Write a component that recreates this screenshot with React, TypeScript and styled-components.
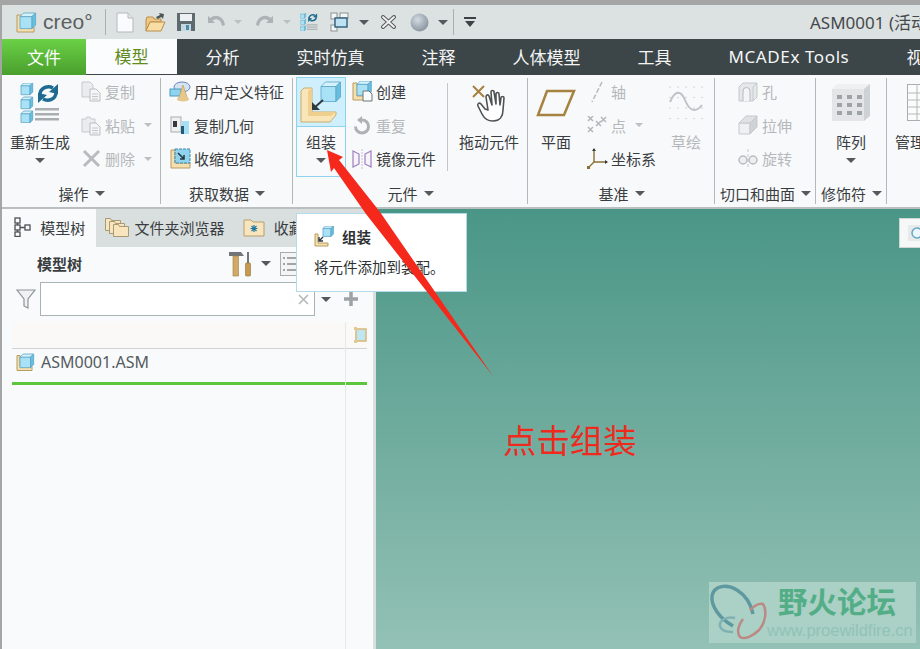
import React from 'react';
import styled, { createGlobalStyle } from 'styled-components';

const FONT = '"Noto Sans CJK SC", "Noto Sans", sans-serif';

const GlobalStyle = createGlobalStyle`
  html, body {
    margin: 0;
    padding: 0;
    background: #a5a5a5;
    overflow: hidden;
  }
  * {
    box-sizing: border-box;
  }
`;

// ------
// Layout
// ------

const Page = styled.div`
  position: relative;
  width: 920px;
  height: 649px;
  overflow: hidden;
  padding: 5px 0 0 2px;
  display: flex;
  flex-direction: column;
  background: #a5a5a5;
  font-family: ${FONT};
  font-size: 15px;
  color: #3a3d3f;
`;

const TitleBar = styled.div`
  flex: 0 0 34px;
  display: flex;
  align-items: center;
  background: #dce1e1;
`;

const Brand = styled.div`
  flex: 0 0 104px;
  height: 26px;
  display: flex;
  align-items: center;
  gap: 6px;
  padding-left: 14px;
  border-right: 1px solid #a9afaf;
`;

const BrandName = styled.span`
  font-family: 'Liberation Sans', sans-serif;
  font-size: 21px;
  letter-spacing: 0.1px;
  color: #5a5f61;
`;

const QuickBar = styled.div`
  flex: 0 0 704px;
  display: flex;
  align-items: center;
  padding-left: 10px;
`;

const QuickSlot = styled.span<{ $left?: number }>`
  flex: none;
  display: flex;
  align-items: center;
  justify-content: center;
  margin-left: ${p => p.$left ?? 0}px;
`;

const QuickDivider = styled.span`
  width: 1px;
  height: 26px;
  margin-left: 5px;
  background: #a9afaf;
`;

const WindowTitle = styled.div`
  flex: none;
  margin-top: -2px;
  white-space: nowrap;
  font-family: 'Noto Sans', 'Noto Sans CJK SC', sans-serif;
  font-size: 17px;
  color: #45494b;
`;

const TabBar = styled.div`
  flex: 0 0 36px;
  display: flex;
  background: #3c4547;
  color: #f4f6f6;
  font-size: 17px;
  white-space: nowrap;
`;

const FileTab = styled.div`
  flex: 0 0 84px;
  display: flex;
  align-items: center;
  justify-content: center;
  padding-bottom: 2px;
  color: #fff;
  background: linear-gradient(180deg, #6ad146 0%, #4a9f2d 100%);
`;

const ActiveTab = styled.div`
  flex: 0 0 91px;
  display: flex;
  align-items: center;
  justify-content: center;
  padding-bottom: 2px;
  color: #5f8c1c;
  background: #fbfcfd;
  margin-bottom: 1px;
`;

const Tab = styled.div<{ $latin?: boolean }>`
  flex: none;
  display: flex;
  align-items: center;
  padding: 0 28.5px 2px;
  font-family: 'Noto Sans', 'Noto Sans CJK SC', sans-serif;
  letter-spacing: ${p => (p.$latin ? '0.6px' : '0')};
`;

const Ribbon = styled.div`
  flex: 0 0 134px;
  display: flex;
  background: #f8f9fb;
  border-bottom: 2px solid #b9bebf;
  white-space: nowrap;
`;

const Group = styled.section<{ $width: number }>`
  flex: 0 0 ${p => p.$width}px;
  min-width: 0;
  height: 132px;
  display: flex;
  flex-direction: column;
  position: relative;
  &::after {
    content: '';
    position: absolute;
    top: 3px;
    bottom: 3px;
    right: 0;
    width: 1px;
    background: #b4b8ba;
  }
`;

const GroupBody = styled.div`
  flex: 0 0 102px;
  display: flex;
`;

const GroupLabel = styled.div`
  flex: 1;
  display: flex;
  align-items: center;
  justify-content: center;
  gap: 6px;
  padding-top: 3px;
`;

const Caret = styled.span<{ $light?: boolean; $small?: boolean }>`
  flex: none;
  display: block;
  width: 0;
  height: 0;
  border-left: ${p => (p.$small ? 4 : 5)}px solid transparent;
  border-right: ${p => (p.$small ? 4 : 5)}px solid transparent;
  border-top: ${p => (p.$small ? 4 : 5)}px solid ${p => (p.$light ? '#bcc0c2' : '#55595b')};
`;

const BigButton = styled.div<{ $width: number; $disabled?: boolean }>`
  flex: 0 0 ${p => p.$width}px;
  display: flex;
  flex-direction: column;
  align-items: center;
  color: ${p => (p.$disabled ? '#b4b8ba' : 'inherit')};
`;

const BigIcon = styled.div`
  flex: 0 0 55px;
  display: flex;
  align-items: center;
  justify-content: center;
`;

const BigLabel = styled.div`
  height: 22px;
  margin-top: 1px;
  line-height: 22px;
`;

const BigCaret = styled(Caret)`
  margin-top: 5px;
`;

const Column = styled.div<{ $width?: number; $left?: number }>`
  flex: 0 0 ${p => (p.$width ? `${p.$width}px` : 'auto')};
  margin-left: ${p => p.$left ?? 0}px;
`;

const Row = styled.div<{ $disabled?: boolean }>`
  height: 33.5px;
  display: flex;
  align-items: center;
  gap: 3px;
  padding-left: 2px;
  color: ${p => (p.$disabled ? '#b4b8ba' : 'inherit')};
`;

const RowIcon = styled.span`
  flex: 0 0 22px;
  display: flex;
  align-items: center;
  justify-content: center;
`;

const RowCaret = styled(Caret)`
  margin-left: 6px;
`;

const AssembleButton = styled.div`
  flex: 0 0 50px;
  height: 100px;
  margin: 2px 3px 0 3px;
  display: flex;
  flex-direction: column;
  align-items: center;
  border: 1px solid #8ed3ee;
`;

const AssembleIcon = styled.div`
  flex: 0 0 49px;
  align-self: stretch;
  display: flex;
  align-items: center;
  justify-content: center;
  background: #cfeffc;
  border-bottom: 1px solid #8ed3ee;
`;

const AssembleLabel = styled.div`
  height: 22px;
  margin-top: 4px;
  line-height: 22px;
`;

const InnerDivider = styled.span`
  flex: none;
  width: 1px;
  height: 88px;
  margin-top: 8px;
  background: #c3c7c9;
`;

const Workspace = styled.div`
  flex: 1;
  display: flex;
  min-height: 0;
`;

const Panel = styled.aside`
  flex: 0 0 371px;
  display: flex;
  flex-direction: column;
  background: #f8fafc;
`;

const PanelTabs = styled.div`
  flex: 0 0 38px;
  display: flex;
  padding-bottom: 2px;
  background: #d9dfdf;
  white-space: nowrap;
  overflow: hidden;
`;

const PanelTab = styled.div<{ $active?: boolean }>`
  flex: none;
  display: flex;
  align-items: center;
  gap: 5px;
  margin-bottom: ${p => (p.$active ? '-2px' : '0')};
  padding: ${p => (p.$active ? '0 11px 2px 12px' : '0 10px 0 9px')};
  background: ${p => (p.$active ? '#f8fafc' : 'transparent')};
`;

const TreeToolbar = styled.div`
  flex: 0 0 35px;
  display: flex;
  align-items: center;
  padding: 0 0 2px 35px;
`;

const TreeTitle = styled.div`
  flex: 0 0 191px;
  font-weight: 700;
`;

const ToolSlot = styled.span<{ $left?: number }>`
  flex: none;
  display: flex;
  align-items: center;
  margin-left: ${p => p.$left ?? 0}px;
`;

const FilterRow = styled.div`
  flex: 0 0 34px;
  display: flex;
  align-items: center;
  padding-left: 14px;
`;

const FilterInput = styled.div`
  flex: 0 0 275px;
  height: 34px;
  margin-left: 4px;
  display: flex;
  align-items: center;
  justify-content: flex-end;
  padding-right: 5px;
  background: #fff;
  border: 1px solid #a6b4b4;
`;

const TreeArea = styled.div`
  flex: 1;
  position: relative;
  margin: 6px 6px 0 10px;
  &::after {
    content: '';
    position: absolute;
    top: 0;
    bottom: 0;
    left: 333px;
    width: 1px;
    background: #e6e9ec;
  }
`;

const TreeHeader = styled.div`
  height: 27px;
  display: flex;
  align-items: center;
  justify-content: flex-end;
  background: #fbf9f8;
  border-bottom: 1px solid #cfd3d3;
  overflow: hidden;
`;

const TreeRow = styled.div`
  height: 33px;
  display: flex;
  align-items: center;
  gap: 6px;
  padding: 0 0 7px 4px;
  font-family: 'Noto Sans', sans-serif;
  font-size: 16px;
  color: #555a5e;
`;

const ActiveLine = styled.div`
  height: 3px;
  background: #5ec63c;
`;

const Splitter = styled.div`
  flex: 0 0 3px;
  background: #d9dfdf;
`;

const Canvas = styled.main`
  flex: 1;
  position: relative;
  background: linear-gradient(180deg, #4a9686 0%, #93c1b5 100%);
`;

const ViewToolbar = styled.div`
  position: absolute;
  top: 9px;
  right: 0;
  width: 21px;
  height: 30px;
  display: flex;
  align-items: center;
  padding-left: 8px;
  background: #f6f8f8;
  border: 1px solid #cfd6d6;
  border-right: 0;
`;

// --------
// Overlays
// --------

const Tooltip = styled.div`
  position: absolute;
  left: 296px;
  top: 213px;
  width: 171px;
  height: 79px;
  padding: 10px 0 0 17px;
  background: #fff;
  border: 1px solid #b2daec;
  font-size: 14.5px;
  color: #2e3133;
`;

const TooltipTitle = styled.div`
  height: 26px;
  display: flex;
  align-items: center;
  gap: 7px;
  padding-bottom: 2px;
  font-weight: 700;
`;

const TooltipText = styled.div`
  margin-top: 6px;
  white-space: nowrap;
`;

const ArrowLayer = styled.svg`
  position: absolute;
  left: 0;
  top: 0;
  pointer-events: none;
`;

const Note = styled.div`
  position: absolute;
  left: 503px;
  top: 415px;
  font-size: 33.4px;
  line-height: 48px;
  color: #ee2a1e;
  white-space: nowrap;
`;

const Watermark = styled.div`
  position: absolute;
  left: 709px;
  top: 582px;
  width: 207px;
  height: 61px;
  display: flex;
  background: #abd0c5;
`;

const WatermarkText = styled.div`
  display: flex;
  flex-direction: column;
  margin-left: -2px;
`;

const WatermarkTitle = styled.div`
  margin-left: 11px;
  font-size: 29.5px;
  line-height: 36px;
  font-weight: 700;
  color: #53ae87;
  white-space: nowrap;
`;

const WatermarkUrl = styled.div`
  margin-top: 1px;
  font-family: 'Liberation Sans', sans-serif;
  font-size: 16.5px;
  line-height: 22px;
  color: #8fc3b6;
  white-space: nowrap;
`;

// -----
// Icons
// -----

function Cube({ x, y, s, faded }: { x: number; y: number; s: number; faded?: boolean }) {
  const d = s * 0.3;
  const fill = faded ? '#e4e7e8' : '#a9e2f7';
  const top = faded ? '#eff1f2' : '#d3f2fc';
  const side = faded ? '#cfd3d5' : '#68bfdf';
  const stroke = faded ? '#c5c9cb' : '#5aa5c4';
  return (
    <g stroke={stroke} strokeWidth="0.8" strokeLinejoin="round">
      <rect x={x} y={y + d} width={s} height={s} fill={fill} />
      <polygon points={`${x},${y + d} ${x + d},${y} ${x + s + d},${y} ${x + s},${y + d}`} fill={top} />
      <polygon points={`${x + s},${y + d} ${x + s + d},${y} ${x + s + d},${y + s} ${x + s},${y + s + d}`} fill={side} />
    </g>
  );
}

function CreoCube() {
  return (
    <svg width="21" height="21" viewBox="0 0 21 21">
      <path d="M1 3h4v12h13v5H1z" fill="#f6dfae" stroke="#b69c62" />
      <Cube x={4} y={1} s={12} />
    </svg>
  );
}

function AsmIcon() {
  return (
    <svg width="19" height="19" viewBox="0 0 19 19">
      <path d="M1 2.5h3v11h12v4H1z" fill="#f6dfae" stroke="#b69c62" />
      <Cube x={4} y={1} s={10.5} />
    </svg>
  );
}

function NewDoc() {
  return (
    <svg width="18" height="21" viewBox="0 0 18 21">
      <path d="M1 1h11l5 5v14H1z" fill="#fafbfc" stroke="#b4b9bc" />
      <path d="M12 1v5h5" fill="#e3e7ea" stroke="#b4b9bc" />
    </svg>
  );
}

function OpenFolder() {
  return (
    <svg width="21" height="21" viewBox="0 0 21 21">
      <path d="M1 8l1-3h6l1 2h7v3H5L1 19z" fill="#f0c885" stroke="#b98f4a" />
      <path d="M1 19l4-9h15l-4 9z" fill="#f8dda4" stroke="#b98f4a" />
      <path d="M11 5l4-2-1-2 5 1-1 5-1.500-2-4 2z" fill="#4e5658" />
    </svg>
  );
}

function SaveDisk() {
  return (
    <svg width="20" height="20" viewBox="0 0 20 20">
      <rect x="1" y="1" width="18" height="18" fill="#5f6a70" />
      <rect x="4" y="2" width="12" height="7" fill="#eef1f3" />
      <rect x="5" y="12" width="10" height="7" fill="#c2d9e4" />
      <rect x="10" y="13" width="3" height="5" fill="#4f8cac" />
    </svg>
  );
}

function Turn({ flip }: { flip?: boolean }) {
  return (
    <svg width="20" height="16" viewBox="0 0 20 16" style={flip ? { transform: 'scaleX(-1)' } : undefined}>
      <path d="M1 2v7h7L5.500 6.500C9 4 14 5 15 12l3-1C17 3 9-1 3.500 4z" fill="#adb3b5" />
    </svg>
  );
}

function Regenerate({ size }: { size: number }) {
  return (
    <svg width={size} height={size} viewBox="0 0 40 40">
      <Cube x={1} y={0} s={9} />
      <Cube x={1} y={14} s={9} />
      <Cube x={1} y={28} s={9} />
      <g fill="none" stroke="#1d6b90" strokeWidth="3.500">
        <path d="M20 11A8.500 7.500 0 0 1 33 5" />
        <path d="M36 10A8.500 7.500 0 0 1 23 16" />
      </g>
      <polygon points="38,1 38,11 29,9" fill="#1d6b90" />
      <polygon points="18,20 18,10 27,12" fill="#1d6b90" />
      <rect x="15" y="25" width="24" height="2.500" fill="#a9aeb0" />
      <rect x="15" y="30" width="24" height="2.500" fill="#a9aeb0" />
      <rect x="15" y="35" width="24" height="2.500" fill="#a9aeb0" />
    </svg>
  );
}

function Windows() {
  return (
    <svg width="19" height="20" viewBox="0 0 19 20">
      <rect x="1" y="1" width="6" height="6" fill="#f4f5f5" stroke="#8c9193" />
      <rect x="10" y="1" width="8" height="5" fill="#f4f5f5" stroke="#8c9193" />
      <rect x="1" y="13" width="6" height="6" fill="#f4f5f5" stroke="#8c9193" />
      <rect x="5" y="6" width="12" height="9" fill="#bfe2f2" stroke="#2b5e7c" strokeWidth="1.400" />
    </svg>
  );
}

function CloseCross() {
  return (
    <svg width="15" height="14" viewBox="0 0 15 14">
      <path d="M2 2l11 10M13 2L2 12" stroke="#5b5f61" strokeWidth="4" strokeLinecap="round" />
      <path d="M2 2l11 10M13 2L2 12" stroke="#f2f3f3" strokeWidth="1.800" strokeLinecap="round" />
    </svg>
  );
}

function Sphere() {
  return (
    <svg width="19" height="19" viewBox="0 0 19 19">
      <defs>
        <radialGradient id="ball" cx="0.4" cy="0.35" r="0.7">
          <stop offset="0" stopColor="#d3dbe2" />
          <stop offset="1" stopColor="#85909b" />
        </radialGradient>
      </defs>
      <circle cx="9.500" cy="9.500" r="9" fill="url(#ball)" />
    </svg>
  );
}

function MenuCaret() {
  return (
    <svg width="14" height="12" viewBox="0 0 14 12">
      <rect x="1" y="1" width="12" height="2" fill="#3e4244" />
      <path d="M2 5h10l-5 6z" fill="#3e4244" />
    </svg>
  );
}

function CopyIcon({ paste }: { paste?: boolean }) {
  return (
    <svg width="20" height="21" viewBox="0 0 20 21">
      {paste ? (
        <path d="M1 4h4l1-2h3l1 2h4v13H1z" fill="#eaecee" stroke="#c6cacc" />
      ) : (
        <path d="M1 1h8l3 3v12H1z" fill="#eaecee" stroke="#c6cacc" />
      )}
      <path d="M9 8h6l4 4v8H9z" fill="#f5f6f7" stroke="#b9bdbf" />
      <path d="M11 13h6M11 15.500h6M11 18h6" stroke="#c3c7c9" />
    </svg>
  );
}

function DeleteCross() {
  return (
    <svg width="19" height="19" viewBox="0 0 19 19">
      <path d="M2 2l15 15M17 2L2 17" stroke="#b7bbbd" strokeWidth="3" />
    </svg>
  );
}

function UserFeature() {
  return (
    <svg width="22" height="21" viewBox="0 0 22 21">
      <ellipse cx="13" cy="6" rx="8" ry="5" fill="#d6e3f2" stroke="#6d83c0" />
      <rect x="1" y="8" width="11" height="7" fill="#8fd3ee" stroke="#4d9dbd" />
      <path d="M14 4l5 15H9z" fill="#e8c78c" stroke="#b9975a" strokeWidth="0.6" />
      <ellipse cx="14" cy="18" rx="6" ry="2.500" fill="#e8c78c" />
    </svg>
  );
}

function CopyGeometry() {
  return (
    <svg width="20" height="20" viewBox="0 0 20 20">
      <rect x="1" y="2" width="10" height="15" fill="#eef0f1" stroke="#a9adaf" />
      <rect x="3" y="6" width="4" height="6" fill="#33393c" />
      <rect x="12" y="6" width="7" height="13" fill="#a6dff4" />
      <rect x="11" y="11" width="3" height="8" fill="#1e5d78" />
    </svg>
  );
}

function Shrinkwrap() {
  return (
    <svg width="21" height="21" viewBox="0 0 21 21">
      <path d="M1 2h4v13h15v5H1z" fill="#f6dfae" stroke="#b69c62" />
      <rect x="5" y="1" width="15" height="14" fill="#8fd3ee" stroke="#3e88a8" strokeDasharray="3 1" />
      <path d="M8 5l6 6M14 7v4h-4" stroke="#2c3a40" strokeWidth="1.600" fill="none" />
    </svg>
  );
}

function Assemble() {
  return (
    <svg width="42" height="42" viewBox="0 0 42 42">
      <path d="M1 10l3-3h8v24h24v3l-6 7H1z" fill="#f9e5b8" stroke="#c9ad72" strokeWidth="1" />
      <path d="M8 10l4-3v24h24l-5 4H8z" fill="#efcf8e" />
      <Cube x={21} y={1} s={15} />
      <path d="M23 19L14 27" stroke="#2f3b40" strokeWidth="2" fill="none" />
      <path d="M12 21v8h8z" fill="#2f3b40" />
    </svg>
  );
}

function CreateIcon() {
  return (
    <svg width="21" height="21" viewBox="0 0 21 21">
      <path d="M1 2h4v13h8v4H1z" fill="#f6dfae" stroke="#b69c62" />
      <Cube x={5} y={0} s={11} />
      <path d="M11 10h6l3 3v7h-9z" fill="#fafbfb" stroke="#6e7476" />
    </svg>
  );
}

function RepeatIcon() {
  return (
    <svg width="19" height="19" viewBox="0 0 19 19">
      <path d="M9 4a6.500 6.500 0 1 1-6.500 6.500" fill="none" stroke="#aeb2b4" strokeWidth="3" />
      <path d="M9 0v8l-5-4z" fill="#aeb2b4" />
    </svg>
  );
}

function MirrorIcon() {
  return (
    <svg width="20" height="20" viewBox="0 0 20 20">
      <path d="M1 2l6 3v10l-6 3zM19 2l-6 3v10l6 3z" fill="#f6f3f9" stroke="#9d7fc0" strokeWidth="1.200" />
      <path d="M10 0v20" stroke="#c8bdd6" strokeDasharray="2 1" />
    </svg>
  );
}

function DragHand() {
  return (
    <svg width="36" height="38" viewBox="0 0 36 38">
      <path d="M2 2l11 11M13 2L2 13" stroke="#a5823f" strokeWidth="2" />
      <path
        d="M7 22l4 8c2 4 6 7 11 7 7 0 10-5 10-11l1-12c0-2-3-2-3 0l-1 7-1-11c0-2-3-2-3 0l0 10-2-12c0-2-3-2-3 0l1 13-3-9c-1-2-3-1-3 1l2 13-3-1-4-5c-2-2-4 0-3 2z"
        fill="#fff"
        stroke="#4f5355"
        strokeWidth="1.600"
        strokeLinejoin="round"
      />
    </svg>
  );
}

function PlaneIcon() {
  return (
    <svg width="40" height="28" viewBox="0 0 40 28">
      <path d="M11 2h27L28 26H2z" fill="none" stroke="#a5823f" strokeWidth="2.500" />
    </svg>
  );
}

function AxisIcon() {
  return (
    <svg width="14" height="22" viewBox="0 0 14 22">
      <path d="M12 1L2 21" stroke="#b9bcbe" strokeWidth="1.600" strokeDasharray="5 2" />
    </svg>
  );
}

function PointIcon() {
  return (
    <svg width="20" height="18" viewBox="0 0 20 18">
      <path d="M1 12l5 5M6 12l-5 5M1 1l5 5M6 1L1 6" stroke="#b4b8ba" strokeWidth="1.500" transform="translate(0 -1)" />
      <path d="M9 5l5 5M14 5l-5 5M14 1l5 5M19 1l-5 5" stroke="#b4b8ba" strokeWidth="1.500" />
    </svg>
  );
}

function CsysIcon() {
  return (
    <svg width="21" height="21" viewBox="0 0 21 21">
      <path d="M7 1v13M7 14h13M7 14L1 20" stroke="#8a6f33" strokeWidth="1.400" fill="none" />
      <path d="M7 0l2 3H5zM21 14l-3 2v-4z" fill="#3a3d3f" />
      <rect x="0" y="18" width="3" height="3" fill="#8a6f33" />
    </svg>
  );
}

function SketchIcon() {
  const dots: [number, number][] = [];
  for (let r = 0; r < 4; r += 1) {
    for (let c = 0; c < 5; c += 1) dots.push([1 + c * 8, 1 + r * 10.5]);
  }
  return (
    <svg width="34" height="34" viewBox="0 0 34 34">
      {dots.map(([x, y]) => (
        <circle key={`${x}-${y}`} cx={x} cy={y} r="0.7" fill="#c2c5c7" />
      ))}
      <path d="M1 16C6 4 12 4 16 14s10 14 17 5" fill="none" stroke="#bfc3c5" strokeWidth="2" />
    </svg>
  );
}

function HoleIcon() {
  return (
    <svg width="20" height="20" viewBox="0 0 20 20">
      <path d="M1 5l4-4h14v14l-4 4H1z" fill="#e5e8ea" stroke="#c5c9cb" />
      <path d="M5 19V9a3.500 3.500 0 0 1 7 0v10" fill="#f3f4f5" stroke="#b6babc" />
      <path d="M15 5v14M15 5l4-4" stroke="#c5c9cb" />
    </svg>
  );
}

function ExtrudeIcon() {
  return (
    <svg width="20" height="20" viewBox="0 0 20 20">
      <path d="M1 8h11v11H1z" fill="#eef0f1" stroke="#c5c9cb" />
      <path d="M1 8l7-7h11L12 8z" fill="#dfe2e4" stroke="#c5c9cb" />
      <path d="M12 8l7-7v11l-7 7z" fill="#cfd3d5" stroke="#c5c9cb" />
    </svg>
  );
}

function RevolveIcon() {
  return (
    <svg width="20" height="20" viewBox="0 0 20 20">
      <path d="M10 0v20" stroke="#c5c9cb" strokeDasharray="3 2" />
      <ellipse cx="5" cy="11" rx="4" ry="4" fill="#eceef0" stroke="#b9bdbf" strokeWidth="1.500" />
      <ellipse cx="15" cy="11" rx="4" ry="4" fill="#eceef0" stroke="#b9bdbf" strokeWidth="1.500" />
    </svg>
  );
}

function PatternIcon() {
  const cells: [number, number][] = [];
  for (let r = 0; r < 3; r += 1) {
    for (let c = 0; c < 3; c += 1) cells.push([5 + c * 10, 12 + r * 8]);
  }
  return (
    <svg width="38" height="39" viewBox="0 0 38 39">
      <path d="M0 6l5-5h33l-6 5z" fill="#eef0f1" />
      <rect x="0" y="6" width="32" height="32" fill="#e3e5e7" />
      <path d="M32 6l6-5v32l-6 5z" fill="#cfd2d4" />
      {cells.map(([x, y]) => (
        <rect key={`${x}-${y}`} x={x} y={y} width="5" height="4" fill="#9ea3a5" />
      ))}
    </svg>
  );
}

function TableIcon() {
  return (
    <svg width="36" height="38" viewBox="0 0 36 38">
      <rect x="0.500" y="0.500" width="35" height="36" fill="#fbfbfc" stroke="#a9adaf" />
      <path d="M0 9h36M0 16h36M0 23h36M0 30h36M10 0v37M22 0v37" stroke="#b5b9bb" />
    </svg>
  );
}

function TreeTabIcon() {
  return (
    <svg width="18" height="20" viewBox="0 0 18 20">
      <g fill="none" stroke="#4d5153" strokeWidth="1.300">
        <rect x="1" y="1" width="5" height="5" />
        <rect x="1" y="8" width="5" height="5" />
        <rect x="11" y="8" width="5" height="5" />
        <rect x="1" y="15" width="5" height="4.500" />
        <path d="M6 10.500h5M3.500 6v2M3.500 13v2" />
      </g>
    </svg>
  );
}

function FoldersIcon() {
  const folder = (x: number, y: number) => (
    <path d={`M${x} ${y + 2}h5l1 2h9v10h-15z`} fill="#f8e5bd" stroke="#a99a76" />
  );
  return (
    <svg width="24" height="22" viewBox="0 0 24 22">
      {folder(0.5, 0.5)}
      {folder(4.5, 3.5)}
      {folder(8.5, 6.5)}
    </svg>
  );
}

function FavoriteIcon() {
  return (
    <svg width="22" height="20" viewBox="0 0 22 20">
      <path d="M1 3h7l2 2h11v14H1z" fill="#f8e5bd" stroke="#b59f6d" />
      <path d="M11 8v7M7.500 11.500h7M8.500 9l5 5M13.500 9l-5 5" stroke="#1f78a4" strokeWidth="1.200" />
    </svg>
  );
}

function ToolsIcon() {
  return (
    <svg width="24" height="26" viewBox="0 0 24 26">
      <path d="M1 1h12l3 4H1z" fill="#6f7578" />
      <rect x="5" y="5" width="5.500" height="20" fill="#d2a964" stroke="#a07f43" strokeWidth="0.600" />
      <rect x="19" y="1" width="2" height="11" fill="#70767a" />
      <rect x="17.500" y="12" width="5" height="13" rx="1" fill="#c79a4f" stroke="#8f6f36" strokeWidth="0.600" />
    </svg>
  );
}

function ListIcon() {
  return (
    <svg width="18" height="24" viewBox="0 0 18 24">
      <rect x="0.500" y="0.500" width="20" height="23" fill="#f3f5f5" stroke="#a9adaf" />
      <path d="M3 6h2M7 6h9M3 12h2M7 12h9M3 18h2M7 18h9" stroke="#55595b" strokeWidth="1.200" />
    </svg>
  );
}

function FunnelIcon() {
  return (
    <svg width="20" height="22" viewBox="0 0 20 22">
      <path d="M1 2h18l-7 9v9l-4-2v-7z" fill="#f0f1f2" stroke="#8f9496" strokeWidth="1.200" />
    </svg>
  );
}

function ClearX() {
  return (
    <svg width="11" height="11" viewBox="0 0 11 11">
      <path d="M1 1l9 9M10 1l-9 9" stroke="#b4b8ba" strokeWidth="1.600" />
    </svg>
  );
}

function PlusIcon() {
  return (
    <svg width="14" height="14" viewBox="0 0 14 14">
      <path d="M7 0v14M0 7h14" stroke="#9ea2a4" strokeWidth="3.500" />
    </svg>
  );
}

function ColumnIcon() {
  return (
    <svg width="13" height="16" viewBox="0 0 13 16" style={{ flex: 'none' }}>
      <rect x="2" y="2" width="10" height="12" fill="#bfe6f3" stroke="#dcbb7c" strokeWidth="1.600" />
      <rect x="0" y="0" width="3" height="3" fill="#e6c88c" />
      <rect x="0" y="13" width="3" height="3" fill="#e6c88c" />
    </svg>
  );
}

function MagnifierIcon() {
  return (
    <svg width="13" height="16" viewBox="0 0 13 16" style={{ flex: 'none' }}>
      <rect x="0" y="0" width="13" height="16" fill="#e7eaea" />
      <circle cx="9" cy="8" r="5" fill="#eaf6fb" stroke="#6aa7c4" strokeWidth="1.500" />
    </svg>
  );
}

function TooltipIcon() {
  return (
    <svg width="21" height="21" viewBox="0 0 21 21">
      <path d="M1 8h3v9h10v3H1z" fill="#f6dfae" stroke="#b69c62" />
      <Cube x={9} y={0} s={8} />
      <path d="M9 11l-4 4M5 11v4h4" stroke="#2f3b40" strokeWidth="1.400" fill="none" />
    </svg>
  );
}

function ButterflyLogo() {
  return (
    <svg width="60" height="61" viewBox="0 0 60 61" style={{ flex: 'none' }}>
      <path d="M24 44C10 36 2 24 3 14 5 3 18 2 28 8c8 5 14 14 16 24" fill="none" stroke="#5f99a0" strokeWidth="3.500" />
      <path d="M41 28c4-4 9-7 13-6 4 6 3 18-4 26-6 6-14 10-19 7-4-5-1-13 3-18" fill="none" stroke="#bb8a84" strokeWidth="2.500" />
      <path d="M26 36c-8-2-16 2-15 8 1 5 7 6 13 6" fill="none" stroke="#7fb1b2" strokeWidth="2.500" />
    </svg>
  );
}

// ---------
// Component
// ---------

function SmallRow({
  icon,
  label,
  disabled,
  caret,
}: {
  icon: React.ReactNode;
  label: string;
  disabled?: boolean;
  caret?: boolean;
}) {
  return (
    <Row $disabled={disabled}>
      <RowIcon>{icon}</RowIcon>
      {label}
      {caret && <RowCaret $light $small />}
    </Row>
  );
}

const otherTabs = ['分析', '实时仿真', '注释', '人体模型', '工具', 'MCADEx Tools', '视图'];

export default function App() {
  return (
    <Page>
      <GlobalStyle />
      <TitleBar>
        <Brand>
          <CreoCube />
          <BrandName>creo°</BrandName>
        </Brand>
        <QuickBar>
          <QuickSlot><NewDoc /></QuickSlot>
          <QuickSlot $left={11}><OpenFolder /></QuickSlot>
          <QuickSlot $left={10}><SaveDisk /></QuickSlot>
          <QuickSlot $left={11}><Turn /></QuickSlot>
          <QuickSlot $left={7}><Caret $light $small /></QuickSlot>
          <QuickSlot $left={12}><Turn flip /></QuickSlot>
          <QuickSlot $left={9}><Caret $light $small /></QuickSlot>
          <QuickSlot $left={9}><Regenerate size={18} /></QuickSlot>
          <QuickSlot $left={12}><Windows /></QuickSlot>
          <QuickSlot $left={10}><Caret /></QuickSlot>
          <QuickSlot $left={12}><CloseCross /></QuickSlot>
          <QuickSlot $left={14}><Sphere /></QuickSlot>
          <QuickSlot $left={9}><Caret /></QuickSlot>
          <QuickDivider />
          <QuickSlot $left={9}><MenuCaret /></QuickSlot>
        </QuickBar>
        <WindowTitle>ASM0001 (活动的) - Creo Parametric</WindowTitle>
      </TitleBar>

      <TabBar>
        <FileTab>文件</FileTab>
        <ActiveTab>模型</ActiveTab>
        {otherTabs.map(tab => (
          <Tab key={tab} $latin={tab === 'MCADEx Tools'}>{tab}</Tab>
        ))}
      </TabBar>

      <Ribbon>
        <Group $width={159}>
          <GroupBody>
            <BigButton $width={76}>
              <BigIcon><Regenerate size={40} /></BigIcon>
              <BigLabel>重新生成</BigLabel>
              <BigCaret />
            </BigButton>
            <Column>
              <SmallRow disabled icon={<CopyIcon />} label="复制" />
              <SmallRow disabled caret icon={<CopyIcon paste />} label="粘贴" />
              <SmallRow disabled caret icon={<DeleteCross />} label="删除" />
            </Column>
          </GroupBody>
          <GroupLabel>操作<Caret /></GroupLabel>
        </Group>

        <Group $width={132}>
          <GroupBody>
            <Column $left={6}>
              <SmallRow icon={<UserFeature />} label="用户定义特征" />
              <SmallRow icon={<CopyGeometry />} label="复制几何" />
              <SmallRow icon={<Shrinkwrap />} label="收缩包络" />
            </Column>
          </GroupBody>
          <GroupLabel>获取数据<Caret /></GroupLabel>
        </Group>

        <Group $width={235}>
          <GroupBody>
            <AssembleButton>
              <AssembleIcon><Assemble /></AssembleIcon>
              <AssembleLabel>组装</AssembleLabel>
              <BigCaret />
            </AssembleButton>
            <Column $width={98}>
              <SmallRow icon={<CreateIcon />} label="创建" />
              <SmallRow disabled icon={<RepeatIcon />} label="重复" />
              <SmallRow icon={<MirrorIcon />} label="镜像元件" />
            </Column>
            <InnerDivider />
            <BigButton $width={82}>
              <BigIcon><DragHand /></BigIcon>
              <BigLabel>拖动元件</BigLabel>
            </BigButton>
          </GroupBody>
          <GroupLabel>元件<Caret /></GroupLabel>
        </Group>

        <Group $width={187}>
          <GroupBody>
            <BigButton $width={56}>
              <BigIcon><PlaneIcon /></BigIcon>
              <BigLabel>平面</BigLabel>
            </BigButton>
            <Column $width={72}>
              <SmallRow disabled icon={<AxisIcon />} label="轴" />
              <SmallRow disabled caret icon={<PointIcon />} label="点" />
              <SmallRow icon={<CsysIcon />} label="坐标系" />
            </Column>
            <BigButton $width={60} $disabled>
              <BigIcon><SketchIcon /></BigIcon>
              <BigLabel>草绘</BigLabel>
            </BigButton>
          </GroupBody>
          <GroupLabel>基准<Caret /></GroupLabel>
        </Group>

        <Group $width={101}>
          <GroupBody>
            <Column $left={20}>
              <SmallRow disabled icon={<HoleIcon />} label="孔" />
              <SmallRow disabled icon={<ExtrudeIcon />} label="拉伸" />
              <SmallRow disabled icon={<RevolveIcon />} label="旋转" />
            </Column>
          </GroupBody>
          <GroupLabel>切口和曲面<Caret /></GroupLabel>
        </Group>

        <Group $width={71}>
          <GroupBody>
            <BigButton $width={70}>
              <BigIcon><PatternIcon /></BigIcon>
              <BigLabel>阵列</BigLabel>
              <BigCaret />
            </BigButton>
          </GroupBody>
          <GroupLabel>修饰符<Caret /></GroupLabel>
        </Group>

        <Group $width={76}>
          <GroupBody>
            <BigButton $width={76}>
              <BigIcon><TableIcon /></BigIcon>
              <BigLabel>管理视图</BigLabel>
            </BigButton>
          </GroupBody>
        </Group>
      </Ribbon>

      <Workspace>
        <Panel>
          <PanelTabs>
            <PanelTab $active><TreeTabIcon />&nbsp;模型树</PanelTab>
            <PanelTab><FoldersIcon />文件夹浏览器</PanelTab>
            <PanelTab><FavoriteIcon />&nbsp;收藏夹</PanelTab>
          </PanelTabs>
          <TreeToolbar>
            <TreeTitle>模型树</TreeTitle>
            <ToolSlot><ToolsIcon /></ToolSlot>
            <ToolSlot $left={9}><Caret /></ToolSlot>
            <ToolSlot $left={9}><ListIcon /></ToolSlot>
          </TreeToolbar>
          <FilterRow>
            <FunnelIcon />
            <FilterInput><ClearX /></FilterInput>
            <ToolSlot $left={6}><Caret /></ToolSlot>
            <ToolSlot $left={13}><PlusIcon /></ToolSlot>
          </FilterRow>
          <TreeArea>
            <TreeHeader><ColumnIcon /></TreeHeader>
            <TreeRow>
              <AsmIcon />
              ASM0001.ASM
            </TreeRow>
            <ActiveLine />
          </TreeArea>
        </Panel>
        <Splitter />
        <Canvas>
          <ViewToolbar><MagnifierIcon /></ViewToolbar>
        </Canvas>
      </Workspace>

      <Tooltip>
        <TooltipTitle><TooltipIcon />组装</TooltipTitle>
        <TooltipText>将元件添加到装配。</TooltipText>
      </Tooltip>

      <Note>点击组装</Note>

      <Watermark>
        <ButterflyLogo />
        <WatermarkText>
          <WatermarkTitle>野火论坛</WatermarkTitle>
          <WatermarkUrl>www.proewildfire.cn</WatermarkUrl>
        </WatermarkText>
      </Watermark>

      <ArrowLayer width="920" height="649" viewBox="0 0 920 649">
        <polygon
          points="327,150 343,157 339,160 380,212 493,376 366,214 334,168 331,172"
          fill="#f5281c"
        />
      </ArrowLayer>
    </Page>
  );
}
